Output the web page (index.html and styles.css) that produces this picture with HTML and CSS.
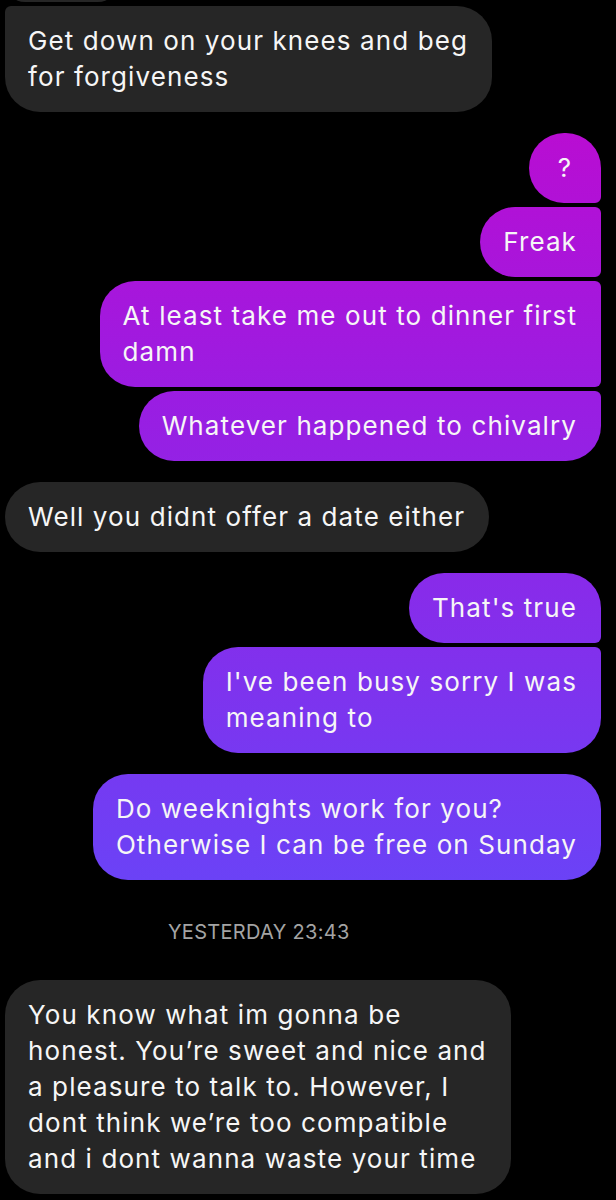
FILE: index.html
```html
<!DOCTYPE html>
<html lang="en">
<head>
    <meta charset="UTF-8">
    <meta name="viewport" content="width=device-width, initial-scale=1.0">
    <title>Chat</title>
    <link rel="stylesheet" href="styles.css">
</head>
<body>
    <div class="thread">
        <div class="group in">
            <div class="bubble peek"></div>
            <div class="bubble first-cut">Get down on your knees and beg<br>for forgiveness</div>
        </div>

        <div class="group out">
            <div class="bubble short top">?</div>
            <div class="bubble mid">Freak</div>
            <div class="bubble mid">At least take me out to dinner first<br>damn</div>
            <div class="bubble bottom">Whatever happened to chivalry</div>
        </div>

        <div class="group in">
            <div class="bubble">Well you didnt offer a date either</div>
        </div>

        <div class="group out">
            <div class="bubble top">That's true</div>
            <div class="bubble bottom">I've been busy sorry I was<br>meaning to</div>
        </div>

        <div class="group out">
            <div class="bubble">Do weeknights work for you?<br>Otherwise I can be free on Sunday</div>
        </div>

        <div class="timestamp">YESTERDAY 23:43</div>

        <div class="group in">
            <div class="bubble">You know what im gonna be<br>honest. You&rsquo;re sweet and nice and<br>a pleasure to talk to. However, I<br>dont think we&rsquo;re too compatible<br>and i dont wanna waste your time</div>
        </div>
    </div>
</body>
</html>
```

FILE: styles.css
```css
body {
    margin: 0;
    background-color: #000;
    font-family: Inter, Roboto, "Liberation Sans", sans-serif;
    color: #f6f6f6;
    overflow: hidden;
}
.thread {
    display: flex;
    flex-direction: column;
    gap: 21px;
    padding: 0 15px 0 5px;
}
.group {
    display: flex;
    flex-direction: column;
    gap: 4px;
}
.group.in {
    align-items: flex-start;
}
.group.out {
    align-items: flex-end;
}
.bubble {
    box-sizing: border-box;
    max-width: 530px;
    min-width: 72px;
    padding: 17px 24px 17px 23px;
    border-radius: 35px;
    font-size: 26px;
    line-height: 36px;
    letter-spacing: 1.1px;
    white-space: nowrap;
    background-color: #262626;
}
.out .bubble {
    background-image: linear-gradient(180deg, #b90dd2 130px, #9a1de2 400px, #6b42f6 880px);
    background-attachment: fixed;
}
.short {
    text-align: center;
    padding-left: 0;
    padding-right: 0;
}
/* received: previous bubble only peeks in at the top */
.peek {
    width: 113px;
    height: 40px;
    margin-top: -38px;
    padding: 0;
    min-width: 0;
    border-radius: 6px 35px 35px 35px;
}
.in .bubble.first-cut {
    border-radius: 6px 35px 35px 35px;
}
.out .top {
    border-bottom-right-radius: 6px;
}
.out .mid {
    border-top-right-radius: 6px;
    border-bottom-right-radius: 6px;
}
.out .bottom {
    border-top-right-radius: 6px;
}
.timestamp {
    margin: 19px 0 15px;
    padding-left: 163px;
    font-size: 20px;
    line-height: 24px;
    letter-spacing: 0.3px;
    color: #a4a4a4;
}
```
